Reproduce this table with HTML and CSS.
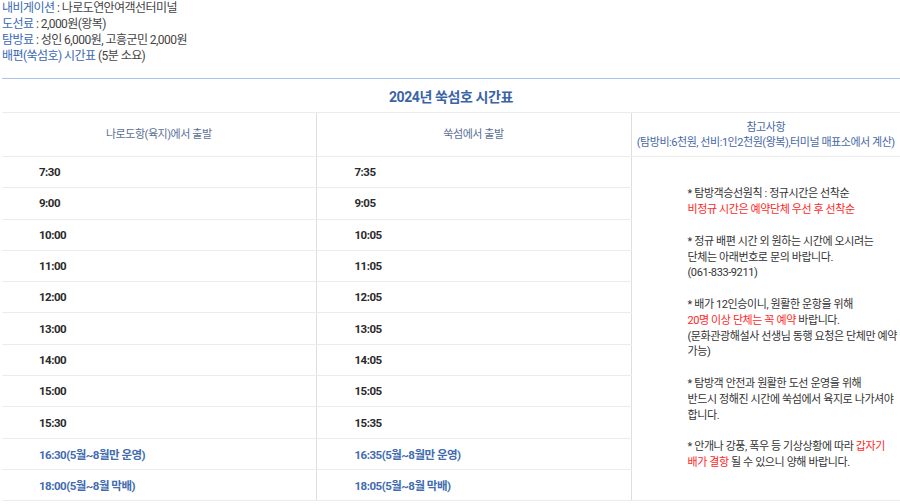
FILE: index.html
```html
<!DOCTYPE html>
<html lang="ko">
<head>
<meta charset="utf-8">
<link rel="stylesheet" href="styles.css">
</head>
<body>
<div class="page">
  <div class="info">
    <p><span class="lbl">내비게이션</span> : 나로도연안여객선터미널</p>
    <p><span class="lbl">도선료</span> : 2,000원(왕복)</p>
    <p><span class="lbl">탐방료</span> : 성인 6,000원, 고흥군민 2,000원</p>
    <p><span class="lbl">배편(쑥섬호) 시간표</span> (5분 소요)</p>
  </div>
  <table class="tt">
    <colgroup>
      <col class="w1">
      <col class="w2">
      <col class="w3">
    </colgroup>
    <thead>
      <tr><th colspan="3" class="title">2024년 쑥섬호 시간표</th></tr>
      <tr class="hrow">
        <th class="c1">나로도항(육지)에서 출발</th>
        <th class="c2">쑥섬에서 출발</th>
        <th class="c3">참고사항<br>(탐방비:6천원, 선비:1인2천원(왕복),터미널 매표소에서 계산)</th>
      </tr>
    </thead>
    <tbody>
      <tr><td class="t">7:30</td><td class="t">7:35</td>
        <td class="notes" rowspan="11">
          <div class="nb">
            <p>* 탐방객승선원칙 : 정규시간은 선착순</p>
            <p class="red">비정규 시간은 예약단체 우선 후 선착순</p>
            <p class="gap">&nbsp;</p>
            <p>* 정규 배편 시간 외 원하는 시간에 오시려는</p>
            <p>단체는 아래번호로 문의 바랍니다.</p>
            <p>(061-833-9211)</p>
            <p class="gap">&nbsp;</p>
            <p>* 배가 12인승이니, 원활한 운항을 위해</p>
            <p><span class="red">20명 이상 단체는 꼭 예약</span> 바랍니다.</p>
            <p>(문화관광해설사 선생님 동행 요청은 단체만 예약</p>
            <p>가능)</p>
            <p class="gap">&nbsp;</p>
            <p>* 탐방객 안전과 원활한 도선 운영을 위해</p>
            <p>반드시 정해진 시간에 쑥섬에서 육지로 나가셔야</p>
            <p>합니다.</p>
            <p class="gap">&nbsp;</p>
            <p>* 안개나 강풍, 폭우 등 기상상황에 따라 <span class="red">갑자기</span></p>
            <p><span class="red">배가 결항</span> 될 수 있으니 양해 바랍니다.</p>
          </div>
        </td>
      </tr>
      <tr><td class="t">9:00</td><td class="t">9:05</td></tr>
      <tr><td class="t">10:00</td><td class="t">10:05</td></tr>
      <tr><td class="t">11:00</td><td class="t">11:05</td></tr>
      <tr><td class="t">12:00</td><td class="t">12:05</td></tr>
      <tr><td class="t">13:00</td><td class="t">13:05</td></tr>
      <tr><td class="t">14:00</td><td class="t">14:05</td></tr>
      <tr><td class="t">15:00</td><td class="t">15:05</td></tr>
      <tr><td class="t">15:30</td><td class="t">15:35</td></tr>
      <tr><td class="t blue">16:30(5월~8월만 운영)</td><td class="t blue">16:35(5월~8월만 운영)</td></tr>
      <tr><td class="t blue">18:00(5월~8월 막배)</td><td class="t blue">18:05(5월~8월 막배)</td></tr>
    </tbody>
  </table>
</div>
</body>
</html>
```

FILE: styles.css
```css
* { box-sizing: border-box; }
html, body { margin: 0; padding: 0; background: #fff; }
body {
  font-family: Roboto, "Noto Sans CJK KR", "Noto Sans", sans-serif;
  color: #333;
  width: 900px;
  height: 504px;
  overflow: hidden;
}
.page { padding-left: 2px; }
p { margin: 0; }
.info {
  font-size: 12px;
  line-height: 16px;
  letter-spacing: -0.55px;
  color: #444;
}
.info .lbl { color: #3a68b4; }
.tt {
  margin-top: 14px;
  width: 898px;
  border-collapse: collapse;
  table-layout: fixed;
  border-top: 1px solid #a9c3e8;
}
.w1 { width: 314px; }
.w2 { width: 315px; }
.w3 { width: 269px; }
.tt th { font-weight: normal; }
.title {
  height: 34px;
  font-size: 14px;
  letter-spacing: -0.4px;
  font-weight: bold !important;
  color: #3b64a8;
  text-align: center;
  border-bottom: 1px solid #ececec;
}
.hrow th {
  height: 44px;
  font-size: 11px;
  line-height: 15px;
  letter-spacing: -0.45px;
  color: #5a6f96;
  text-align: center;
  vertical-align: middle;
  border-bottom: 1px solid #ececec;
  padding: 0;
}
.c1 { border-right: 1px solid #dedede; }
.c2 { border-right: 1px solid #dedede; }
.hrow .c3 { color: #4868a6; }
td.t {
  height: 31.3px;
  padding: 0 0 0 37px;
  font-size: 11.5px;
  letter-spacing: -0.5px;
  font-weight: bold;
  color: #2b2b2b;
  border-bottom: 1px solid #ececec;
  border-right: 1px solid #dedede;
  vertical-align: middle;
  white-space: nowrap;
}
td.t + td.t { padding-left: 38px; }
td.t.blue { color: #3f6cb0; }
td.notes {
  vertical-align: middle;
  padding: 0 0 0 56px;
  font-size: 11px;
  line-height: 15.8px;
  letter-spacing: -0.4px;
  color: #333;
  border-bottom: 1px solid #ececec;
}
.nb p { white-space: nowrap; }
.red { color: #ff1e1e; }
```
